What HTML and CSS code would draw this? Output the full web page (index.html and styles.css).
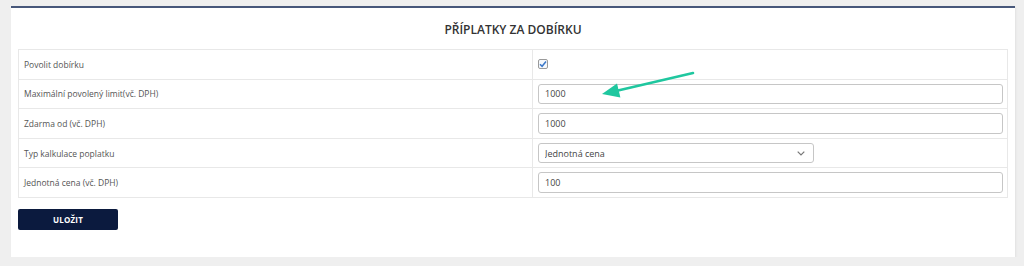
FILE: index.html
```html
<!DOCTYPE html>
<html lang="cs">
<head>
  <meta charset="UTF-8">
  <title>Příplatky za dobírku</title>
  <link rel="stylesheet" href="styles.css">
</head>
<body>
  <div class="card">
    <h2 class="card-title">PŘÍPLATKY ZA DOBÍRKU</h2>
    <table class="settings">
      <tr>
        <td class="label">Povolit dobírku</td>
        <td class="value">
          <span class="check">
            <svg width="8" height="8" viewBox="0 0 8 8"><path d="M1 4.2 L3.1 6.3 L7 1.6" fill="none" stroke="#3b78c9" stroke-width="1.5"/></svg>
          </span>
        </td>
      </tr>
      <tr>
        <td class="label">Maximální povolený limit(vč. DPH)</td>
        <td class="value"><input type="text" value="1000"></td>
      </tr>
      <tr>
        <td class="label">Zdarma od (vč. DPH)</td>
        <td class="value"><input type="text" value="1000"></td>
      </tr>
      <tr>
        <td class="label">Typ kalkulace poplatku</td>
        <td class="value">
          <div class="select-wrap">
            <select><option>Jednotná cena</option></select>
            <svg class="chevron" width="8" height="5" viewBox="0 0 8 5"><path d="M0.7 0.7 L4 4 L7.3 0.7" fill="none" stroke="#777" stroke-width="1.2"/></svg>
          </div>
        </td>
      </tr>
      <tr>
        <td class="label">Jednotná cena (vč. DPH)</td>
        <td class="value"><input type="text" value="100"></td>
      </tr>
    </table>
    <button class="save">ULOŽIT</button>

    <svg class="pointer" width="1004" height="250" viewBox="0 0 1004 250">
      <line x1="682" y1="65" x2="607" y2="82.5" stroke="#1fc79f" stroke-width="2.6" stroke-linecap="round"/>
      <polygon points="591,86 606,75.4 609.4,89.4" fill="#1fc79f"/>
    </svg>
  </div>
</body>
</html>
```

FILE: styles.css
```css
body {
  margin: 0;
  padding: 6px 9px 0 11px;
  background: #efefef;
  font-family: 'Open Sans', sans-serif;
  color: #333;
}
.card {
  position: relative;
  background: #fff;
  border-top: 2px solid #47577a;
  padding: 0 7px 28px;
  height: 221px;
  box-shadow: 1px 1px 2px rgba(0,0,0,0.06);
}
.card-title {
  margin: 0;
  height: 41px;
  line-height: 43px;
  text-align: center;
  font-size: 12px;
  font-weight: 600;
  color: #333;
}
.settings {
  width: 100%;
  border-collapse: collapse;
  border: 1px solid #e8e8e8;
}
.settings td {
  border-top: 1px solid #e8e8e8;
  padding: 4px 5px;
  height: 20.6px;
  vertical-align: middle;
}
.settings td.label {
  width: 503px;
  font-size: 8.5px;
  color: #555;
  padding-left: 5px;
}
.settings td.value {
  border-left: 1px solid #e8e8e8;
  padding-right: 4px;
}
.settings input {
  display: block;
  box-sizing: border-box;
  width: 100%;
  height: 20.6px;
  border: 1px solid #c6c6c6;
  border-radius: 3px;
  padding: 0 6px;
  font-family: 'Open Sans', sans-serif;
  font-size: 9px;
  color: #444;
  outline: none;
}
.check {
  display: flex;
  align-items: center;
  justify-content: center;
  width: 10px;
  height: 10px;
  box-sizing: border-box;
  border: 1px solid #9a9a9a;
  border-radius: 2px;
  background: #f5f8fc;
}
.select-wrap {
  position: relative;
  width: 276px;
}
.select-wrap select {
  display: block;
  width: 100%;
  height: 20.6px;
  box-sizing: border-box;
  appearance: none;
  -webkit-appearance: none;
  background: #fff;
  border: 1px solid #c6c6c6;
  border-radius: 3px;
  padding: 0 6px;
  font-family: 'Open Sans', sans-serif;
  font-size: 9px;
  color: #444;
}
.chevron {
  position: absolute;
  right: 9px;
  top: 8px;
}
.save {
  display: block;
  margin-top: 11px;
  width: 100px;
  height: 21px;
  background: #0b1a3e;
  color: #fff;
  border: none;
  border-radius: 2px;
  font-family: 'Open Sans', sans-serif;
  font-size: 8px;
  font-weight: 700;
  letter-spacing: 0.2px;
  cursor: pointer;
}
.pointer {
  position: absolute;
  left: 0;
  top: 0;
  pointer-events: none;
}
```
